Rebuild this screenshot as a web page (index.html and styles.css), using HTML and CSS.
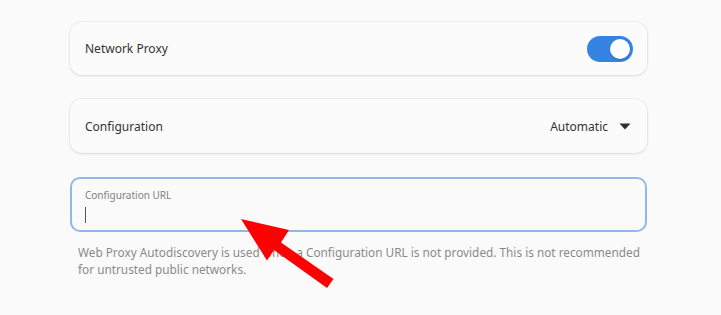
FILE: index.html
```html
<!DOCTYPE html>
<html>
<head>
<meta charset="utf-8">
<link rel="stylesheet" href="styles.css">
</head>
<body>
<div class="page">
  <div class="card">
    <span class="label">Network Proxy</span>
    <span class="switch"><span class="knob"></span></span>
  </div>
  <div class="card card-2">
    <span class="label">Configuration</span>
    <span class="combo">
      <span class="value">Automatic</span>
      <svg class="caret" width="12" height="7" viewBox="0 0 12 7"><path d="M0.5 0.5 L11.5 0.5 L6 6.5 Z" fill="#2e2e2e"/></svg>
    </span>
  </div>
  <div class="entry">
    <span class="entry-label">Configuration URL</span>
    <span class="cursor"></span>
  </div>
  <p class="help">Web Proxy Autodiscovery is used when a Configuration URL is not provided. This is not recommended for untrusted public networks.</p>
</div>
<svg class="arrow" width="721" height="315" viewBox="0 0 721 315">
  <polygon points="241,219 289,230 281,242.5 333.5,279 327,288 274,250 267,260.5" fill="#ff0000"/>
</svg>
</body>
</html>
```

FILE: styles.css
```css
html, body {
  margin: 0;
  padding: 0;
  background: #fafafa;
  width: 721px;
  height: 315px;
  overflow: hidden;
  font-family: "Noto Sans", "DejaVu Sans", sans-serif;
  color: #2e2e2e;
}

.page {
  width: 577px;
  margin-left: 70px;
  padding-top: 22px;
  display: flex;
  flex-direction: column;
}

.card {
  height: 53px;
  box-sizing: border-box;
  background: #fbfbfb;
  border-radius: 12px;
  box-shadow: 0 0 0 1px rgba(0, 0, 0, 0.04), 0 1px 3px rgba(0, 0, 0, 0.09);
  display: flex;
  align-items: center;
  justify-content: space-between;
  padding: 0 14px 0 15px;
}

.card-2 {
  margin-top: 24px;
  height: 54px;
}

.label {
  font-size: 12px;
  color: #333333;
}

.switch {
  width: 46px;
  height: 26px;
  border-radius: 13px;
  background: #3584e4;
  display: flex;
  align-items: center;
  justify-content: flex-end;
  padding: 0 3px;
  box-sizing: border-box;
}

.knob {
  width: 20px;
  height: 20px;
  border-radius: 50%;
  background: #ffffff;
  box-shadow: 0 1px 2px rgba(0, 0, 0, 0.2);
}

.combo {
  display: flex;
  align-items: center;
  gap: 11px;
  padding-right: 2px;
}

.value {
  font-size: 12px;
  color: #333333;
}

.caret {
  display: block;
}

.entry {
  margin-top: 24px;
  height: 55px;
  box-sizing: border-box;
  border: 2px solid #91b8ea;
  border-radius: 10px;
  background: #fafafa;
  display: flex;
  flex-direction: column;
  padding: 9px 13px 0 13px;
}

.entry-label {
  font-size: 10px;
  color: #808080;
  line-height: 14px;
}

.cursor {
  display: block;
  width: 1px;
  height: 16px;
  background: #555555;
  margin-top: 5px;
}

.help {
  margin: 12px -12px 0 8px;
  font-size: 11.8px;
  line-height: 17px;
  color: #8a8a8a;
}

.arrow {
  position: absolute;
  top: 0;
  left: 0;
  pointer-events: none;
}
```
